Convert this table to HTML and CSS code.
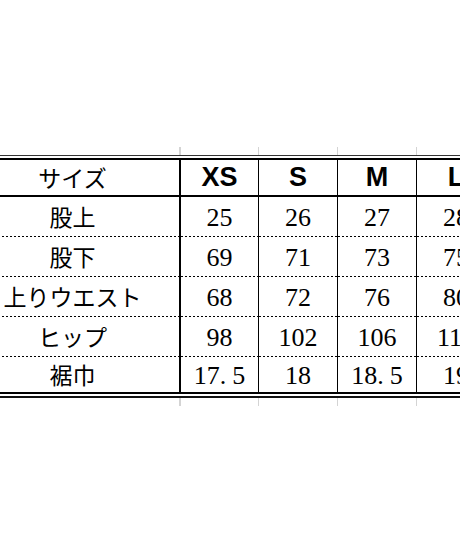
FILE: index.html
```html
<!DOCTYPE html>
<html lang="ja">
<head>
<meta charset="utf-8">
<title>サイズ表</title>
<link rel="stylesheet" href="styles.css">
</head>
<body>
<div class="page">
  <div class="ticks">
    <span class="t1"></span><span></span><span></span><span></span><span></span>
  </div>
  <div class="sheet">
    <div class="grid">
      <div class="c first head jp">サイズ</div>
      <div class="c head en">XS</div>
      <div class="c head en">S</div>
      <div class="c head en">M</div>
      <div class="c head en">L</div>

      <div class="c first dot jp">股上</div>
      <div class="c dot num">25</div>
      <div class="c dot num">26</div>
      <div class="c dot num">27</div>
      <div class="c dot num">28</div>

      <div class="c first dot jp">股下</div>
      <div class="c dot num">69</div>
      <div class="c dot num">71</div>
      <div class="c dot num">73</div>
      <div class="c dot num">75</div>

      <div class="c first dot jp">上りウエスト</div>
      <div class="c dot num">68</div>
      <div class="c dot num">72</div>
      <div class="c dot num">76</div>
      <div class="c dot num">80</div>

      <div class="c first dot jp">ヒップ</div>
      <div class="c dot num">98</div>
      <div class="c dot num">102</div>
      <div class="c dot num">106</div>
      <div class="c dot num">110</div>

      <div class="c first last jp">裾巾</div>
      <div class="c last num">17<span class="pt">.</span>5</div>
      <div class="c last num">18</div>
      <div class="c last num">18<span class="pt">.</span>5</div>
      <div class="c last num">19</div>
    </div>
  </div>
  <div class="ticks">
    <span class="t1"></span><span></span><span></span><span></span><span></span>
  </div>
</div>
</body>
</html>
```

FILE: styles.css
```css
html, body {
  margin: 0;
  padding: 0;
  background: #ffffff;
}

body {
  width: 460px;
  height: 552px;
  overflow: hidden;
}

.page {
  padding-top: 147px;
  margin-left: -34px;
  width: 560px;
}

.ticks {
  display: grid;
  grid-template-columns: 215px 78px 79px 79px 79px;
  height: 8px;
}

.ticks span {
  border-right: 1px solid #d4d4d4;
}

.ticks .t1 {
  border-right: 2px solid #d4d4d4;
}

.sheet {
  border-top: 1px solid #333;
  border-bottom: 2px solid #111;
  padding: 2px 0;
}

.grid {
  display: grid;
  grid-template-columns: 215px 78px 79px 79px 79px;
  border-top: 2px solid #000;
  border-bottom: 2px solid #000;
}

.c {
  box-sizing: border-box;
  display: flex;
  align-items: center;
  justify-content: center;
  border-right: 1px solid #000;
  color: #000;
  line-height: 1;
  white-space: nowrap;
}

.c.first {
  border-right: 2px solid #000;
}

.head {
  height: 37px;
  border-bottom: 2px solid #000;
}

.dot {
  height: 40px;
  padding-bottom: 1px;
  background-image: repeating-linear-gradient(to right, #000 0 2px, transparent 2px 4px);
  background-size: 100% 1px;
  background-repeat: no-repeat;
  background-position: left bottom;
}

.last {
  height: 35px;
}

.jp {
  font-family: "Noto Sans CJK JP", sans-serif;
  font-size: 23px;
  font-weight: 400;
}

.en {
  font-family: "Liberation Sans", Arial, sans-serif;
  font-size: 27px;
  font-weight: 700;
}

.num {
  font-family: "Liberation Serif", "Times New Roman", serif;
  font-size: 26px;
  padding-top: 2px;
}

.pt {
  margin-right: 6px;
}
```
